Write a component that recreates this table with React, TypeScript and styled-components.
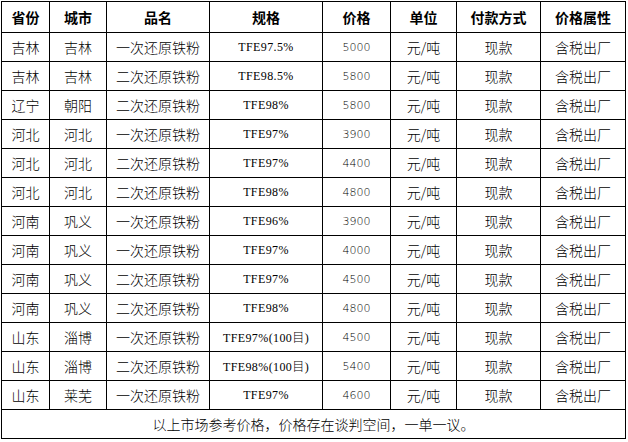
import React from 'react';
import styled, { createGlobalStyle } from 'styled-components';

const GlobalStyle = createGlobalStyle`
  html, body {
    margin: 0;
    padding: 0;
    background: #fff;
  }
  body {
    font-family: "Noto Sans CJK SC", "Liberation Sans", sans-serif;
    color: #000;
  }
`;

const Wrap = styled.div`
  padding: 1px 0 0 1px;
`;

const PriceTable = styled.table`
  width: 625px;
  table-layout: fixed;
  border-collapse: collapse;
  border: 1px solid #000;
`;

const HeadCell = styled.th`
  height: 30px;
  padding: 0;
  border: 1px solid #000;
  font-size: 14px;
  font-weight: 700;
  text-align: center;
  vertical-align: middle;
`;

const Cell = styled.td<{ $kind?: 'num' | 'spec' }>`
  height: 28px;
  padding: 0;
  border: 1px solid #000;
  text-align: center;
  vertical-align: middle;
  white-space: nowrap;
  font-size: ${(p) => (p.$kind === 'num' ? '11px' : p.$kind === 'spec' ? '12px' : '14px')};
  letter-spacing: ${(p) => (p.$kind === 'spec' ? '0.4px' : 'normal')};
  font-weight: 300;
  font-family: ${(p) =>
    p.$kind === 'num'
      ? '"DejaVu Sans", sans-serif'
      : p.$kind === 'spec'
      ? '"Liberation Serif", "Noto Sans CJK SC", serif'
      : '"Noto Sans CJK SC", sans-serif'};
`;

const Note = styled.td`
  height: 28px;
  padding: 0;
  border: 1px solid #000;
  text-align: center;
  font-size: 14px;
  font-weight: 300;
`;

const widths = [48, 57, 103, 113, 68, 66, 84, 85];
const headers = ['省份', '城市', '品名', '规格', '价格', '单位', '付款方式', '价格属性'];

type Row = [string, string, string, string, string];

const rows: Row[] = [
  ['吉林', '吉林', '一次还原铁粉', 'TFE97.5%', '5000'],
  ['吉林', '吉林', '二次还原铁粉', 'TFE98.5%', '5800'],
  ['辽宁', '朝阳', '二次还原铁粉', 'TFE98%', '5800'],
  ['河北', '河北', '一次还原铁粉', 'TFE97%', '3900'],
  ['河北', '河北', '二次还原铁粉', 'TFE97%', '4400'],
  ['河北', '河北', '二次还原铁粉', 'TFE98%', '4800'],
  ['河南', '巩义', '一次还原铁粉', 'TFE96%', '3900'],
  ['河南', '巩义', '一次还原铁粉', 'TFE97%', '4000'],
  ['河南', '巩义', '二次还原铁粉', 'TFE97%', '4500'],
  ['河南', '巩义', '二次还原铁粉', 'TFE98%', '4800'],
  ['山东', '淄博', '一次还原铁粉', 'TFE97%(100目)', '4500'],
  ['山东', '淄博', '二次还原铁粉', 'TFE98%(100目)', '5400'],
  ['山东', '莱芜', '一次还原铁粉', 'TFE97%', '4600'],
];

export default function App() {
  return (
    <>
      <GlobalStyle />
      <Wrap>
        <PriceTable>
          <colgroup>
            {widths.map((w, i) => (
              <col key={i} style={{ width: w }} />
            ))}
          </colgroup>
          <thead>
            <tr>
              {headers.map((h) => (
                <HeadCell key={h}>{h}</HeadCell>
              ))}
            </tr>
          </thead>
          <tbody>
            {rows.map((r, i) => (
              <tr key={i}>
                <Cell>{r[0]}</Cell>
                <Cell>{r[1]}</Cell>
                <Cell>{r[2]}</Cell>
                <Cell $kind="spec">{r[3]}</Cell>
                <Cell $kind="num">{r[4]}</Cell>
                <Cell>元/吨</Cell>
                <Cell>现款</Cell>
                <Cell>含税出厂</Cell>
              </tr>
            ))}
            <tr>
              <Note colSpan={8}>以上市场参考价格，价格存在谈判空间，一单一议。</Note>
            </tr>
          </tbody>
        </PriceTable>
      </Wrap>
    </>
  );
}
